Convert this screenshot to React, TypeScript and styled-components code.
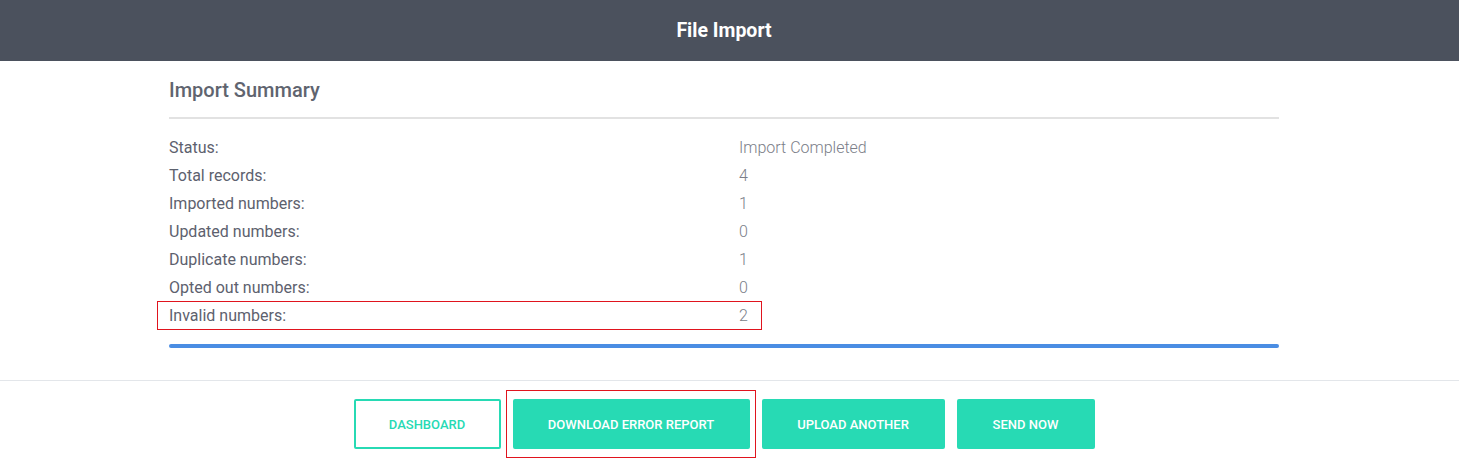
import React from "react";
import styled, { createGlobalStyle, css } from "styled-components";

const Global = createGlobalStyle`
  html, body { margin: 0; padding: 0; background: #fff; }
  body { font-family: Roboto, "Liberation Sans", Arial, sans-serif; }
  * { box-sizing: border-box; }
`;

const Page = styled.div`
  padding-right: 11px;
`;

const Header = styled.header`
  height: 61px;
  margin-right: -11px;
  padding-right: 11px;
  background: #4b515d;
  display: flex;
  align-items: center;
  justify-content: center;
  color: #fff;
  font-size: 19.5px;
  font-weight: 700;
`;

const Container = styled.main`
  width: 1140px;
  margin: 0 auto;
  padding: 17px 15px 0;
`;

const Title = styled.h2`
  margin: 0;
  font-size: 20px;
  font-weight: 500;
  color: #60646f;
  line-height: 24px;
  padding-bottom: 15px;
  border-bottom: 2px solid #e2e2e2;
`;

const Rows = styled.div`
  padding-top: 15px;
  display: flex;
  flex-direction: column;
`;

const flagBox = css`
  &::after {
    content: "";
    position: absolute;
    pointer-events: none;
    border: 1px solid #e0141e;
  }
`;

const Row = styled.div<{ $flag?: boolean }>`
  position: relative;
  display: grid;
  grid-template-columns: 570px 1fr;
  height: 28px;
  line-height: 28px;
  font-size: 16px;
  ${(p) =>
    p.$flag &&
    css`
      ${flagBox}
      &::after {
        left: -12px;
        top: -1px;
        width: 603px;
        height: 27px;
      }
    `}
`;

const Label = styled.span`
  color: #5d616e;
`;

const Value = styled.span`
  color: #7b7e88;
  font-weight: 300;
`;

const Progress = styled.div`
  margin-top: 14px;
  height: 4px;
  border-radius: 2px;
  background: #4a8de3;
`;

const Footer = styled.footer`
  margin-top: 32px;
  margin-right: -11px;
  padding: 18px 11px 17px 0;
  border-top: 1px solid #e3e6ea;
  display: flex;
  justify-content: center;
  gap: 12px;
`;

const BtnWrap = styled.div<{ $flag?: boolean }>`
  position: relative;
  ${(p) =>
    p.$flag &&
    css`
      ${flagBox}
      &::after {
        left: -7px;
        top: -9px;
        right: -6px;
        bottom: -9px;
      }
    `}
`;

const Button = styled.button<{ $outline?: boolean; $w: number }>`
  display: block;
  width: ${(p) => p.$w}px;
  height: 50px;
  border-radius: 2px;
  font-family: Roboto, "Liberation Sans", Arial, sans-serif;
  font-size: 13px;
  font-weight: 500;
  text-transform: uppercase;
  cursor: pointer;
  border: 2px solid #27dab4;
  background: ${(p) => (p.$outline ? "#fff" : "#27dab4")};
  color: ${(p) => (p.$outline ? "#27dab4" : "#fff")};
`;

const rows: [string, string][] = [
  ["Status:", "Import Completed"],
  ["Total records:", "4"],
  ["Imported numbers:", "1"],
  ["Updated numbers:", "0"],
  ["Duplicate numbers:", "1"],
  ["Opted out numbers:", "0"],
  ["Invalid numbers:", "2"],
];

export default function App() {
  return (
    <Page>
      <Global />
      <Header>File Import</Header>
      <Container>
        <Title>Import Summary</Title>
        <Rows>
          {rows.map(([l, v], i) => (
            <Row key={l} $flag={i === rows.length - 1}>
              <Label>{l}</Label>
              <Value>{v}</Value>
            </Row>
          ))}
        </Rows>
        <Progress />
      </Container>
      <Footer>
        <BtnWrap>
          <Button $outline $w={147}>Dashboard</Button>
        </BtnWrap>
        <BtnWrap $flag>
          <Button $w={237}>Download Error Report</Button>
        </BtnWrap>
        <BtnWrap>
          <Button $w={183}>Upload Another</Button>
        </BtnWrap>
        <BtnWrap>
          <Button $w={138}>Send Now</Button>
        </BtnWrap>
      </Footer>
    </Page>
  );
}
